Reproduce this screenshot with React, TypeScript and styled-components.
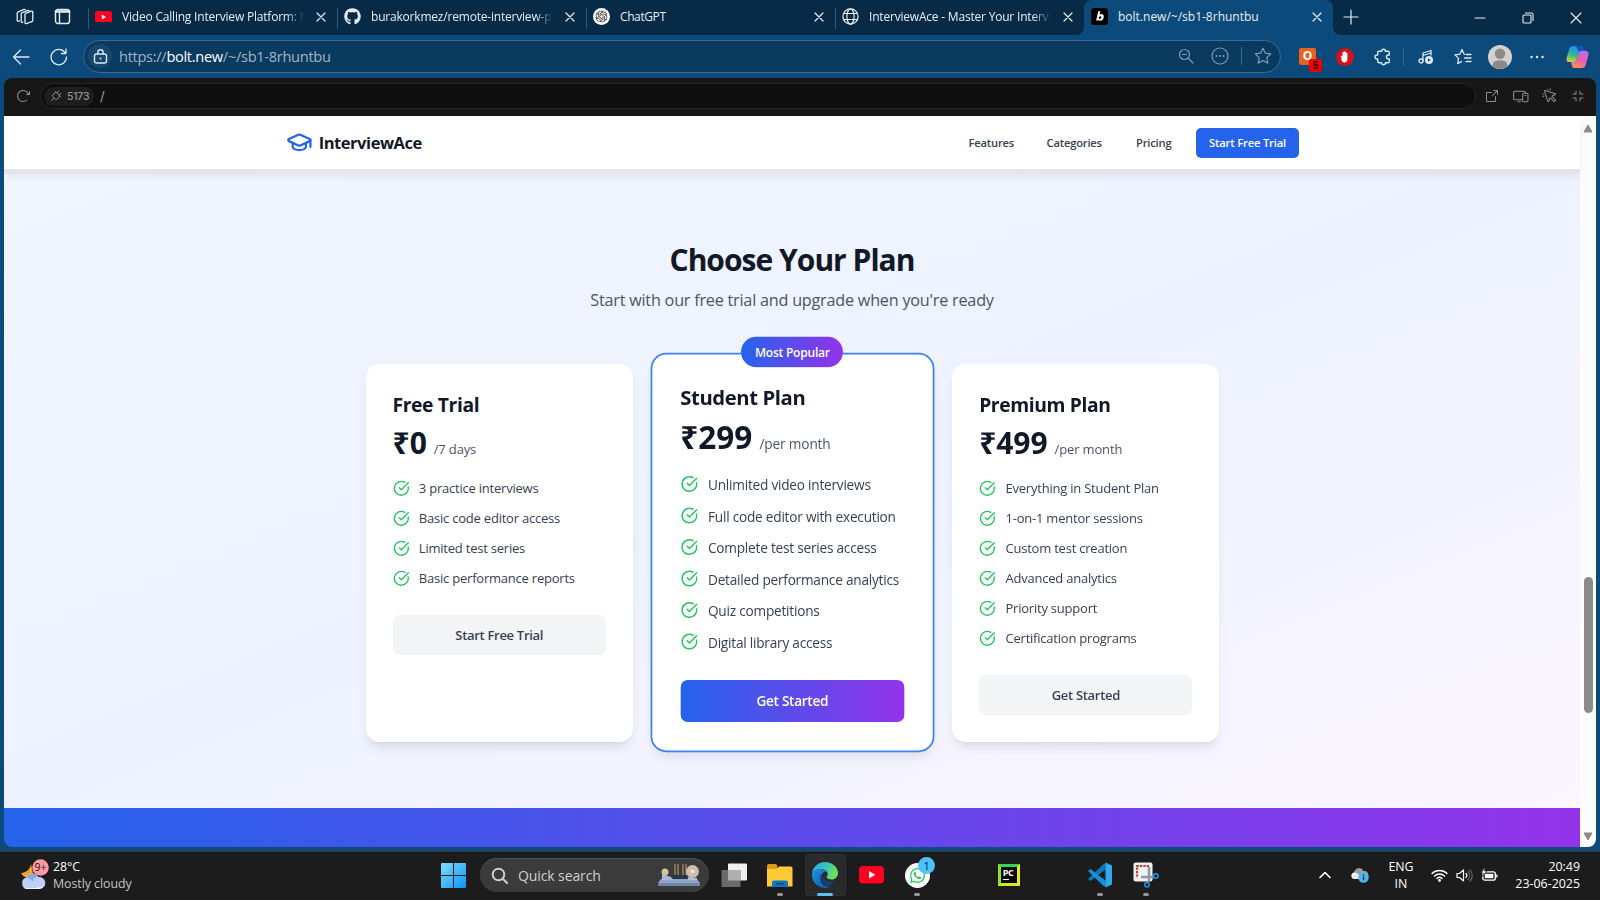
import React from 'react';
import styled, { createGlobalStyle, css } from 'styled-components';
import { CircleCheckBig, GraduationCap } from 'lucide-react';
import { FaGithub, FaWhatsapp } from 'react-icons/fa';
import { SiOpenai } from 'react-icons/si';
import {
  PiArrowClockwise,
  PiArrowSquareOut,
  PiCornersIn,
  PiCursorClick,
  PiDevices,
  PiPlug,
} from 'react-icons/pi';

const GlobalStyle = createGlobalStyle`
  * {
    box-sizing: border-box;
  }

  body {
    margin: 0;
    overflow: hidden;
    font-family: 'Segoe UI', 'Open Sans', 'Noto Sans', sans-serif;
  }

  svg {
    display: block;
    flex: none;
  }
`;

const Desktop = styled.div`
  display: flex;
  flex-direction: column;
  width: 1600px;
  height: 900px;
  background: #0b4a7a;
`;

/* ---------- tabs ---------- */

const TabStrip = styled.div`
  display: flex;
  align-items: stretch;
  flex: none;
  height: 35px;
  background: #072a47;
  color: #e6edf3;
`;

const StripTools = styled.div`
  display: flex;
  align-items: center;
  gap: 20px;
  width: 88px;
  padding: 0 0 2px 16px;
`;

const TabBox = styled.div<{ $active?: boolean }>`
  position: relative;
  display: flex;
  align-items: center;
  width: 249px;
  padding: 0 11px 2px 7px;

  ${({ $active }) =>
    $active
      ? css`
          background: #0b4a7a;
          border-radius: 8px 8px 0 0;

          &::before,
          &::after {
            content: '';
            position: absolute;
            bottom: 0;
            width: 7px;
            height: 7px;
          }

          &::before {
            left: -7px;
            background: radial-gradient(circle at 0 0, transparent 6.5px, #0b4a7a 7px);
          }

          &::after {
            right: -7px;
            background: radial-gradient(circle at 100% 0, transparent 6.5px, #0b4a7a 7px);
          }
        `
      : css`
          background: linear-gradient(#3a566d, #3a566d) 0 8px / 1px 21px no-repeat;
        `}
`;

const TabTitle = styled.div<{ $fade?: boolean; $tracking?: number }>`
  flex: 1;
  margin: 0 6px 0 10px;
  white-space: nowrap;
  font-size: 12px;
  line-height: 18px;
  letter-spacing: ${({ $tracking = -0.2 }) => $tracking}px;
  ${({ $fade }) =>
    $fade && 'mask-image: linear-gradient(90deg, #000 calc(100% - 24px), transparent 97%);'}
`;

const NewTab = styled.div`
  display: flex;
  align-items: center;
  flex: 1;
  padding: 0 0 2px 10px;
`;

const WindowButtons = styled.div`
  display: flex;
  align-items: center;
  gap: 36px;
  padding-right: 18px;
`;

/* ---------- toolbar ---------- */

const Toolbar = styled.div`
  display: flex;
  align-items: center;
  flex: none;
  height: 43px;
  padding: 0 11px 0 11px;
  color: #dce8f2;
`;

const NavButtons = styled.div`
  display: flex;
  align-items: center;
  gap: 20px;
  width: 72px;
  padding-left: 1px;
`;

const AddressBar = styled.div`
  display: flex;
  align-items: center;
  width: 1198px;
  height: 33px;
  padding: 0 8px 1px 4px;
  border: 1px solid #3f6b8f;
  border-radius: 17px;
  background: #093a60;
`;

const LockCircle = styled.div`
  display: flex;
  align-items: center;
  justify-content: center;
  width: 24px;
  height: 24px;
  border-radius: 50%;
  background: #17476e;
`;

const Url = styled.div`
  flex: 1;
  padding-left: 7px;
  font-size: 14.6px;
  letter-spacing: -0.3px;
  color: #a3b5c4;

  b {
    font-weight: 400;
    color: #fff;
  }
`;

const AddressTools = styled.div`
  display: flex;
  align-items: center;
  color: #7b9ab3;
`;

const VerticalRule = styled.i<{ $margin: string }>`
  width: 1px;
  height: 18px;
  margin: ${({ $margin }) => $margin};
  background: #3c6587;
`;

const Extensions = styled.div`
  display: flex;
  align-items: center;
  flex: 1;
  padding-left: 18px;
`;

const OrangeExtension = styled.div`
  position: relative;
  width: 17px;
  height: 17px;
  margin-right: 20px;
  border-radius: 2px;
  background: #e9601f;
  color: #fff;
  font-size: 12px;
  font-weight: 700;
  line-height: 16px;
  text-align: center;
`;

const ExtensionCount = styled.span`
  position: absolute;
  left: 10px;
  top: 11px;
  width: 13px;
  height: 13px;
  border-radius: 3px;
  background: #f10000;
  color: #2a0000;
  font: 700 10px/13px 'Liberation Sans', sans-serif;
`;

const Avatar = styled.div`
  margin: 0 18px 0 16px;
`;

/* ---------- preview frame ---------- */

const Preview = styled.div`
  display: flex;
  flex-direction: column;
  flex: none;
  height: 768.5px;
  margin: 0 4px 4.5px;
  overflow: hidden;
  border-radius: 8px;
  background: #171717;
`;

const PreviewBar = styled.div`
  display: flex;
  align-items: center;
  flex: none;
  height: 38px;
  padding: 0 10px 2px 11px;
  color: #8e8e8e;
`;

const PathField = styled.div`
  display: flex;
  align-items: center;
  width: 1436px;
  height: 26px;
  margin-left: 9px;
  padding-left: 3px;
  border: 1px solid #262626;
  border-radius: 13px;
  background: #0f0f0f;
  color: #a0a0a0;
  font: 13px 'Inter', sans-serif;
`;

const Port = styled.div`
  display: flex;
  align-items: center;
  gap: 5px;
  width: 50px;
  height: 19px;
  margin-right: 6px;
  padding-left: 6px;
  border-radius: 10px;
  background: #1e1e1e;
  color: #949494;
  font-size: 10.4px;
  font-weight: 500;
  letter-spacing: -0.2px;
`;

const PreviewTools = styled.div`
  display: flex;
  align-items: center;
  gap: 12.5px;
  margin-left: auto;
`;

const Viewport = styled.div`
  display: flex;
  flex: 1;
  min-height: 0;
`;

const Page = styled.main`
  display: flex;
  flex-direction: column;
  width: 1576px;
`;

const Scrollbar = styled.div`
  display: flex;
  flex-direction: column;
  align-items: center;
  width: 16px;
  padding: 8px 0 6px;
  background: #fcfcfc;
`;

const Thumb = styled.div`
  width: 9px;
  height: 136px;
  margin: 444px 0 auto;
  border-radius: 5px;
  background: #8b8b8b;
`;

/* ---------- site ---------- */

const SiteHeader = styled.header`
  position: relative;
  display: flex;
  align-items: center;
  flex: none;
  height: 53px;
  padding: 0 281px 0 282px;
  background: #fff;
  box-shadow: 0 5px 0 #e3e5e8, 0 8px 8px -1px rgb(0 0 0 / 0.07);
`;

const Brand = styled.div`
  display: flex;
  align-items: center;
  gap: 6px;
  flex: 1;
  color: #111827;
  font-size: 16.5px;
  font-weight: 700;
  letter-spacing: -0.45px;
`;

const SiteLink = styled.a<{ $width: number; $gap: number }>`
  width: ${({ $width }) => $width}px;
  margin-right: ${({ $gap }) => $gap}px;
  color: #374151;
  font-size: 11.2px;
  font-weight: 600;
  letter-spacing: -0.2px;
  white-space: nowrap;
`;

const TrialButton = styled.button`
  width: 103px;
  height: 30px;
  padding: 0 0 1px;
  border: 0;
  border-radius: 5px;
  background: #2563eb;
  color: #fff;
  font: inherit;
  font-size: 11.3px;
  font-weight: 600;
  letter-spacing: -0.22px;
`;

const Pricing = styled.section`
  display: flex;
  flex-direction: column;
  align-items: center;
  flex: none;
  height: 639px;
  padding-top: 73px;
  background: linear-gradient(to bottom right, #eff6ff, #eef2ff, #faf5ff);
`;

const Heading = styled.h2`
  margin: 0;
  color: #111827;
  font-size: 30px;
  font-weight: 700;
  line-height: 35px;
  letter-spacing: -0.98px;
`;

const Subheading = styled.p`
  margin: 11px 0 51.3px;
  color: #4b5563;
  font-size: 16.2px;
  line-height: 25px;
  letter-spacing: -0.22px;
`;

const Plans = styled.div`
  display: grid;
  grid-template-columns: repeat(3, 266.67px);
  gap: 26.67px;
  height: 377.4px;
  margin-left: 1px;
`;

const PlanCard = styled.article<{ $popular?: boolean }>`
  position: relative;
  padding: 26.67px;
  border-radius: 13.33px;
  background: #fff;
  box-shadow: 0 8px 12px -3px rgb(0 0 0 / 0.1), 0 3px 5px -4px rgb(0 0 0 / 0.1);

  ${({ $popular }) =>
    $popular &&
    css`
      transform: scale(1.05);
      box-shadow: 0 0 0 1.67px #3b82f6, 0 8px 12px -3px rgb(0 0 0 / 0.1),
        0 3px 5px -4px rgb(0 0 0 / 0.1);
    `}
`;

const Ribbon = styled.div`
  position: absolute;
  left: 50%;
  top: -17.2px;
  width: 97px;
  height: 29.2px;
  transform: translateX(-50%);
  border-radius: 15px;
  background: linear-gradient(to right, #2563eb, #9333ea);
  color: #fff;
  font-size: 11.5px;
  font-weight: 600;
  line-height: 29px;
  letter-spacing: -0.24px;
  text-align: center;
`;

const PlanName = styled.h3`
  margin: 1.2px 0 6px;
  color: #111827;
  font-size: 19.3px;
  font-weight: 700;
  line-height: 26.67px;
  letter-spacing: -0.38px;
`;

const Price = styled.div`
  display: flex;
  align-items: baseline;
  gap: 7px;
  height: 34px;
  margin-bottom: 19.3px;
  color: #111827;
  font-size: 30px;
  font-weight: 700;
  line-height: 36px;
  letter-spacing: -0.05px;

  span {
    color: #4b5563;
    font-size: 13px;
    font-weight: 400;
    letter-spacing: -0.15px;
  }
`;

const FeatureList = styled.ul`
  display: flex;
  flex-direction: column;
  gap: 10px;
  margin: 0 0 26.67px;
  padding: 0;
  list-style: none;
`;

const Feature = styled.li`
  display: flex;
  align-items: center;
  gap: 9.7px;
  height: 20px;
  color: #374151;
  font-size: 13px;
  letter-spacing: -0.22px;
  white-space: nowrap;
`;

const PlanButton = styled.button<{ $primary?: boolean }>`
  width: 100%;
  height: 40px;
  border: 0;
  border-radius: 6.67px;
  background: ${({ $primary }) =>
    $primary ? 'linear-gradient(to right, #2563eb, #9333ea)' : '#f3f4f6'};
  color: ${({ $primary }) => ($primary ? '#fff' : '#374151')};
  font: inherit;
  font-size: 13px;
  font-weight: 600;
  letter-spacing: -0.3px;
`;

const NextSection = styled.section`
  flex: 1;
  background: linear-gradient(to right, #2563eb, #9333ea);
`;

/* ---------- taskbar ---------- */

const Taskbar = styled.footer`
  display: flex;
  align-items: center;
  flex: 1;
  padding: 0 20px 2px;
  border-top: 1px solid #343638;
  background: #1c1c1c;
  color: #fff;
`;

const Weather = styled.div`
  display: flex;
  align-items: center;
  gap: 4px;
  width: 421px;
  font-size: 12.4px;
  line-height: 17px;
  letter-spacing: -0.05px;

  p {
    margin: 0;
  }

  p + p {
    color: #c5c5c5;
  }
`;

const SearchBox = styled.div`
  display: flex;
  align-items: center;
  width: 229px;
  height: 34px;
  margin: 0 2px 0 14px;
  padding: 0 9px 0 11px;
  border-radius: 17px;
  background: #3b3b3b;
  box-shadow: inset 0 1px #505050;
  color: #cfcfcf;
  font-size: 14px;
  letter-spacing: -0.1px;

  span {
    flex: 1;
    padding-left: 10px;
  }
`;

const AppSlot = styled.div<{ $active?: boolean; $running?: boolean }>`
  position: relative;
  display: flex;
  align-items: center;
  justify-content: center;
  width: 41.8px;
  height: 42px;
  margin: 0 2px;
  border-radius: 4px;
  ${({ $active }) => $active && 'background: #2a2a2a; box-shadow: inset 0 0 0 1px #303030;'}

  ${({ $active, $running }) =>
    $running &&
    css`
      &::after {
        content: '';
        position: absolute;
        bottom: 0;
        width: ${$active ? 16 : 6}px;
        height: 3px;
        border-radius: 2px;
        background: ${$active ? '#60bdf0' : '#969696'};
      }
    `}
`;

const WhatsAppDisc = styled.div`
  display: flex;
  align-items: center;
  justify-content: center;
  width: 25px;
  height: 25px;
  border-radius: 50%;
  background: #fff;
  color: #25c35b;
`;

const UnreadBadge = styled.span`
  position: absolute;
  left: 22px;
  top: 3px;
  width: 17px;
  height: 17px;
  border-radius: 50%;
  background: #4cc2ff;
  color: #0a2a3d;
  font-size: 11px;
  line-height: 17px;
  text-align: center;
`;

const PyCharm = styled.div`
  width: 22px;
  height: 22px;
  padding: 1px 2px;
  border: 3px solid;
  border-color: #32d74b #e6e82a #d3e42c #8fe02c;
  background: #050505;
  font-size: 9px;
  font-weight: 700;
  line-height: 10px;
  letter-spacing: -0.4px;

  &::after {
    content: '';
    display: block;
    width: 6px;
    height: 1px;
    margin-top: 1px;
    background: #fff;
  }
`;

const Tray = styled.div`
  display: flex;
  align-items: center;
  margin-left: auto;
  font-size: 12.4px;
  line-height: 17px;
`;

const Language = styled.div`
  width: 28px;
  margin: 0 16px 0 18px;
  text-align: center;
  white-space: nowrap;
`;

const Clock = styled.div`
  width: 82px;
  text-align: right;
`;

/* ---------- icons ---------- */

const Stroke = ({
  size,
  width = 1.3,
  children,
}: {
  size: number;
  width?: number;
  children: React.ReactNode;
}) => (
  <svg
    width={size}
    height={size}
    viewBox={`0 0 ${size} ${size}`}
    fill="none"
    stroke="currentColor"
    strokeWidth={width}
    strokeLinecap="round"
    strokeLinejoin="round"
  >
    {children}
  </svg>
);

const CloseIcon = () => (
  <Stroke size={10} width={1.2}>
    <path d="M1 1l8 8M9 1L1 9" />
  </Stroke>
);

const YouTubeIcon = ({ size }: { size: number }) => (
  <svg width={size} height={size * 0.7} viewBox="0 0 20 14">
    <rect width="20" height="14" rx="3" fill="#ff0022" />
    <path d="M8 4l5 3-5 3z" fill="#fff" />
  </svg>
);

const GlobeIcon = () => (
  <Stroke size={17} width={1.2}>
    <circle cx="8.5" cy="8.5" r="7.6" />
    <ellipse cx="8.5" cy="8.5" rx="3.6" ry="7.6" />
    <path d="M1.7 5.5h13.6M1.7 11.5h13.6" />
  </Stroke>
);

const GptIcon = () => (
  <svg width="17" height="17" viewBox="0 0 17 17">
    <circle cx="8.5" cy="8.5" r="8.5" fill="#fff" />
    <SiOpenai x="2.5" y="2.5" size={12} color="#222" />
  </svg>
);

const BoltIcon = () => (
  <svg width="17" height="17" viewBox="0 0 17 17">
    <rect width="17" height="17" rx="3.5" fill="#000" />
    <path
      d="M7.2 3.3L5.2 12.6h2l.3-.9c.5.7 1.1 1 1.9 1 2 0 3.4-1.9 3.4-4 0-1.6-.9-2.6-2.3-2.6-.8 0-1.4.3-1.9.8l.7-3.6zM9.1 8.2c.8 0 1.2.4 1.2 1.1 0 1-.7 1.7-1.5 1.7-.6 0-1-.4-1-1 0-1 .6-1.8 1.3-1.8z"
      fill="#fff"
    />
  </svg>
);

const CopilotIcon = () => (
  <svg width="23" height="22" viewBox="0 0 23 22">
    <defs>
      <linearGradient id="cpLeft" x1="0.3" y1="0" x2="0" y2="1">
        <stop offset="0" stopColor="#1b8ff0" />
        <stop offset="0.5" stopColor="#35b98a" />
        <stop offset="1" stopColor="#f4d42e" />
      </linearGradient>
      <linearGradient id="cpRight" x1="0.6" y1="0" x2="0.2" y2="1">
        <stop offset="0" stopColor="#b56cf2" />
        <stop offset="0.5" stopColor="#ef5fa0" />
        <stop offset="1" stopColor="#f9935a" />
      </linearGradient>
    </defs>
    <path
      d="M16 22H8.5C7 22 6.3 21 5.9 19.7L5.2 16h2.6c1.5 0 2.3-1 2.8-2.5l2-6.5c.5-1.5 1.4-2.3 2.9-2.3H20c2.2 0 3 2.3 2.4 4.5l-2.6 9.6C19.2 20.6 18 22 16 22z"
      fill="url(#cpRight)"
    />
    <path
      d="M7 0h7.5c1.5 0 2.2 1 2.6 2.3l.7 2.4h-2.3c-1.5 0-2.3.8-2.8 2.3l-2 6.5C10.2 15 9.3 16 7.8 16H3C.8 16 0 14.2.6 12l2.6-9C3.8 1.2 5 0 7 0z"
      fill="url(#cpLeft)"
    />
    <path d="M10 0h4.5c1.5 0 2.2 1 2.6 2.3l.7 2.4h-2.3c-1.2 0-2 .5-2.5 1.5z" fill="#1a4fc4" />
  </svg>
);

const WeatherIcon = () => (
  <svg width="29" height="32" viewBox="0 0 29 32">
    <path d="M11 5c-1 5-4 8.5-10 9 2 5 9 6 12 1z" fill="#f5a623" />
    <path d="M7 30a6 6 0 0 1-1-11.5A7 7 0 0 1 18.5 18 6 6 0 0 1 20 30z" fill="#bcd0f5" />
    <path d="M6 18.5a7 7 0 0 1 12.5-.5c-3 0-5 2-6 4-2-2-4-3-6.5-3.5z" fill="#8eabdf" />
    <path d="M3 28c4 1.5 16 1.5 20-1a5 5 0 0 1-4 3H7a6 6 0 0 1-4-2z" fill="#eef4ff" />
    <circle cx="20.5" cy="8.5" r="8.3" fill="#ff9aa2" />
    <text x="14.5" y="12.3" fontSize="10.5" fill="#2b1114">
      9+
    </text>
  </svg>
);

const WindowsIcon = () => (
  <svg width="25" height="25" viewBox="0 0 25 25">
    <defs>
      <linearGradient id="win" x1="0" y1="0" x2="1" y2="1">
        <stop offset="0" stopColor="#7fdcff" />
        <stop offset="1" stopColor="#0a94f5" />
      </linearGradient>
    </defs>
    <path
      d="M0 1a1 1 0 0 1 1-1h11v12H0zM13 0h11a1 1 0 0 1 1 1v11H13zM0 13h12v12H1a1 1 0 0 1-1-1zM13 13h12v11a1 1 0 0 1-1 1H13z"
      fill="url(#win)"
    />
  </svg>
);

const PressIcon = () => (
  <svg width="42" height="24" viewBox="0 0 42 24">
    <path d="M3 16h36l3 4v3H0v-3z" fill="#8fa3c4" />
    <path d="M0 20h42v3H0z" fill="#6f86ad" />
    <circle cx="7" cy="9" r="3.5" fill="#d8c3a0" />
    <path d="M4 11l9 3 2 3H4z" fill="#aebad0" />
    <path d="M17 1v12M20 1v12M25 1v12M28 1v12" stroke="#c6a56a" />
    <path d="M15 12h14v4H15z" fill="#27344d" />
    <circle cx="34.5" cy="8.5" r="6.5" fill="#cdbfae" />
    <circle cx="34.5" cy="8.5" r="2" fill="#f1e3cd" />
    <path d="M30 14l9 1v2h-9z" fill="#b6bfd2" />
  </svg>
);

const TaskViewIcon = () => (
  <svg width="26" height="24" viewBox="0 0 26 24">
    <rect x="7" y="0.5" width="19" height="17" rx="1" fill="#f0f0f0" />
    <rect x="0.5" y="7" width="19" height="17" rx="1" fill="#6b6b6b" />
    <path d="M7 7h12.5v10.5H7z" fill="#b0b0b0" />
  </svg>
);

const FolderIcon = () => (
  <svg width="26" height="23" viewBox="0 0 26 23">
    <path d="M0 2a2 2 0 0 1 2-2h7l2 2.5h-1V10H0z" fill="#dd9b18" />
    <path d="M0 5h9l3-2.5h12A1.5 1.5 0 0 1 25.5 4v18.500H0z" fill="#fdc935" />
    <path d="M5 23v-4.500a2 2 0 0 1 2-2h12a2 2 0 0 1 2 2V23z" fill="#1173c7" />
    <path d="M9 19h8v1.5H9z" fill="#0a4b8c" />
  </svg>
);

const EdgeIcon = () => (
  <svg width="26" height="26" viewBox="0 0 26 26">
    <defs>
      <linearGradient id="edgeTop" x1="0" y1="0" x2="1" y2="0.3">
        <stop offset="0" stopColor="#2aa7e8" />
        <stop offset="0.6" stopColor="#35c7b8" />
        <stop offset="1" stopColor="#6fe05a" />
      </linearGradient>
      <linearGradient id="edgeLow" x1="0" y1="0" x2="1" y2="1">
        <stop offset="0" stopColor="#1e93e4" />
        <stop offset="1" stopColor="#0d55a6" />
      </linearGradient>
    </defs>
    <path
      d="M0 12C.5 5 6 0 13 0c7.5 0 13 5.5 13 11 0 4-3 6.5-6.5 6.5-3 0-5-1-5-2.2 0-.8 1.200-1.300 1.200-3.300C15.700 9 12 7 8.500 7 4 7 1 9.500 0 12z"
      fill="url(#edgeTop)"
    />
    <path
      d="M0 13C0 9.5 4 7 8.5 7c2.5 0 5 1 6.3 2.5C11 9.5 8.5 13 8.5 16c0 5 4 9 9 9-1.5.7-3 1-4.5 1C6 26 0 20.5 0 13z"
      fill="url(#edgeLow)"
    />
    <path
      d="M10.7 12c-.7 1-1.200 2.500-1.200 4 0 4.500 3.500 7.500 7 8 3-1 5.500-3 7-5.500-1.500 1-3 1.300-5 1.300-4.500 0-8-3.300-7.800-7.800z"
      fill="#12407c"
    />
  </svg>
);

const VsCodeIcon = () => (
  <svg width="26" height="26" viewBox="0 0 26 26">
    <path d="M18.5 7.5L3.5 19 1 17 16 2.5 19 1z" fill="#0f76bd" />
    <path d="M18.5 18.5L3.5 7 1 9l15 14.5 3 1.5z" fill="#1a8fd8" />
    <path d="M18.5 0.5L25 3.5v19l-6.5 3z" fill="#2fa8ee" />
  </svg>
);

const SnipIcon = () => (
  <svg width="26" height="26" viewBox="0 0 26 26">
    <rect x="0.5" y="0.5" width="19" height="19" rx="2" fill="#f1f1f1" />
    <path
      d="M16 4H4v12"
      fill="none"
      stroke="#c3342b"
      strokeWidth="2.2"
      strokeDasharray="2.2 1.2"
    />
    <path d="M16 5v14M8 15h13" stroke="#8d99a5" strokeWidth="2.5" />
    <circle cx="22.8" cy="14" r="2.3" fill="none" stroke="#2196e8" strokeWidth="1.5" />
    <circle cx="14" cy="22.8" r="2.3" fill="none" stroke="#2196e8" strokeWidth="1.5" />
  </svg>
);

/* ---------- data ---------- */

const tabs = [
  { title: 'Video Calling Interview Platform: N', icon: <YouTubeIcon size={17} />, fade: true },
  { title: 'burakorkmez/remote-interview-pl', icon: <FaGithub size={17} />, fade: true },
  { title: 'ChatGPT', icon: <GptIcon />, tracking: -0.4 },
  { title: 'InterviewAce - Master Your Intervi', icon: <GlobeIcon />, fade: true },
  { title: 'bolt.new/~/sb1-8rhuntbu', icon: <BoltIcon />, active: true, tracking: 0 },
];

const plans = [
  {
    name: 'Free Trial',
    price: '₹0',
    period: '/7 days',
    cta: 'Start Free Trial',
    features: [
      '3 practice interviews',
      'Basic code editor access',
      'Limited test series',
      'Basic performance reports',
    ],
  },
  {
    name: 'Student Plan',
    price: '₹299',
    period: '/per month',
    cta: 'Get Started',
    popular: true,
    features: [
      'Unlimited video interviews',
      'Full code editor with execution',
      'Complete test series access',
      'Detailed performance analytics',
      'Quiz competitions',
      'Digital library access',
    ],
  },
  {
    name: 'Premium Plan',
    price: '₹499',
    period: '/per month',
    cta: 'Get Started',
    features: [
      'Everything in Student Plan',
      '1-on-1 mentor sessions',
      'Custom test creation',
      'Advanced analytics',
      'Priority support',
      'Certification programs',
    ],
  },
];

/* ---------- parts ---------- */

const BrowserTabs = () => (
  <TabStrip>
    <StripTools>
      <Stroke size={18}>
        <path d="M9 6.5a1.5 1.5 0 0 1 1-1.4l5.5-1.9a1 1 0 0 1 1.3 1v8a1.5 1.5 0 0 1-1 1.4l-5.4 2a1 1 0 0 1-1.4-.9z" />
        <path d="M6.8 14.2a1 1 0 0 1-1.6-.9V6A1.5 1.5 0 0 1 6.2 4.6L12 2.4a1 1 0 0 1 1.2.4" />
        <path d="M3.2 12.7a1 1 0 0 1-2-.9V5.2a1.5 1.5 0 0 1 1-1.4L8 1.4a1 1 0 0 1 1.2.3" />
      </Stroke>
      <Stroke size={17} width={1.4}>
        <rect x="1.5" y="1.5" width="14" height="14" rx="2.5" />
        <path d="M2 3.5h13" strokeWidth="2.6" />
        <path d="M5.5 5v10" />
      </Stroke>
    </StripTools>
    {tabs.map(({ title, icon, active, fade, tracking }) => (
      <TabBox key={title} $active={active}>
        {icon}
        <TabTitle $fade={fade} $tracking={tracking}>
          {title}
        </TabTitle>
        <CloseIcon />
      </TabBox>
    ))}
    <NewTab>
      <Stroke size={16} width={1.2}>
        <path d="M8 1v14M1 8h14" />
      </Stroke>
    </NewTab>
    <WindowButtons>
      <Stroke size={12} width={1.1}>
        <path d="M1 6h10" />
      </Stroke>
      <Stroke size={12} width={1.1}>
        <rect x="1" y="3" width="8" height="8" rx="1" />
        <path d="M3.5 1H9.5a1.5 1.5 0 0 1 1.5 1.5V8.5" />
      </Stroke>
      <Stroke size={12} width={1.1}>
        <path d="M1 1l10 10M11 1L1 11" />
      </Stroke>
    </WindowButtons>
  </TabStrip>
);

const BrowserToolbar = () => (
  <Toolbar>
    <NavButtons>
      <Stroke size={18}>
        <path d="M17 9H1.5M8.5 2l-7 7 7 7" />
      </Stroke>
      <Stroke size={18}>
        <path d="M16.5 9A7.7 7.7 0 1 1 15 4.5M16 1v4.5h-4.5" />
      </Stroke>
    </NavButtons>
    <AddressBar>
      <LockCircle>
        <Stroke size={15} width={1.4}>
          <rect x="1.5" y="5" width="12" height="9" rx="2" />
          <path d="M4.8 5V3.5a2.7 2.7 0 0 1 5.4 0V5" />
          <circle cx="7.5" cy="9.5" r="0.4" />
        </Stroke>
      </LockCircle>
      <Url>
        https://<b>bolt.new</b>/~/sb1-8rhuntbu
      </Url>
      <AddressTools>
        <Stroke size={16} width={1.2}>
          <circle cx="6.5" cy="6.5" r="5" />
          <path d="M10.5 10.5L15 15M4.5 6.5h4" />
        </Stroke>
        <span style={{ width: 17 }} />
        <Stroke size={18} width={1.2}>
          <circle cx="9" cy="9" r="8" />
          <path d="M5.5 9h.1M9 9h.1M12.5 9h.1" strokeWidth="2" />
        </Stroke>
        <VerticalRule $margin="0 12px 0 12px" />
        <Stroke size={18} width={1.2}>
          <path d="M9 1.2l2.400 5 5.400.7-4 3.800 1 5.400L9 13.500l-4.800 2.600 1-5.400-4-3.800 5.400-.7z" />
        </Stroke>
      </AddressTools>
    </AddressBar>
    <Extensions>
      <OrangeExtension>
        O<ExtensionCount>5</ExtensionCount>
      </OrangeExtension>
      <svg width="18" height="18" viewBox="0 0 18 18">
        <circle cx="9" cy="9" r="9" fill="#d5121b" />
        <path
          d="M5.5 9.5l-1-1.200c.5-.8 1.300-.5 2 .4V4.500c0-.8 1-.8 1.100 0V3.700c.1-.8 1.200-.8 1.300 0v.6c.1-.8 1.200-.8 1.300 0v1c.2-.7 1.200-.6 1.200.2V11c0 2.300-1.300 3.500-3 3.500-1.600 0-2.500-1-3-2.500z"
          fill="#fff"
        />
      </svg>
      <span style={{ width: 20 }} />
      <Stroke size={18} width={1.4}>
        <path d="M5 3.200H7.600a1.900 1.900 0 0 1 3.800 0H14a1.300 1.300 0 0 1 1.300 1.300V7h-.8a2 2 0 0 0 0 4h.8v2.500a1.300 1.300 0 0 1-1.300 1.300H11.400a1.900 1.900 0 0 1-3.800 0H5a1.300 1.300 0 0 1-1.300-1.300V11H3a2 2 0 0 1 0-4h.700V4.500A1.300 1.300 0 0 1 5 3.200z" />
      </Stroke>
      <VerticalRule $margin="0 14px 0 11px" />
      <Stroke size={16}>
        <circle cx="3" cy="12" r="2" />
        <path d="M5 12V4l8-2.500V6M5 6.500l8-2.500" />
        <circle cx="11" cy="11" r="4" fill="#dce8f2" stroke="none" />
        <path d="M10 9.200v3.600l2.800-1.800z" fill="#0b4a7a" stroke="none" />
      </Stroke>
      <span style={{ width: 20 }} />
      <Stroke size={18}>
        <path d="M10.200 6.300L8 1.500l-2.200 4.700L1 6.900l3.500 3.500-.8 5.200 3.800-2M12 6.500h5M10.500 10h6.500M12 13.500h5" />
      </Stroke>
      <Avatar>
        <svg width="24" height="24" viewBox="0 0 24 24">
          <circle cx="12" cy="12" r="12" fill="#d3d1cf" />
          <circle cx="12" cy="8.8" r="5.2" fill="#8c8a88" />
          <path
            d="M4.5 21.3c0-4 2.5-6 7.5-6s7.5 2 7.5 6A12 12 0 0 1 12 24a12 12 0 0 1-7.5-2.7z"
            fill="#8c8a88"
          />
        </svg>
      </Avatar>
      <Stroke size={14} width={2.4}>
        <path d="M1.5 7h.1M7 7h.1M12.5 7h.1" />
      </Stroke>
      <span style={{ flex: 1 }} />
      <CopilotIcon />
    </Extensions>
  </Toolbar>
);

const PreviewToolbar = () => (
  <PreviewBar>
    <PiArrowClockwise size={16} />
    <PathField>
      <Port>
        <PiPlug size={12} />
        5173
      </Port>
      /
    </PathField>
    <PreviewTools>
      <PiArrowSquareOut size={16} />
      <PiDevices size={17} />
      <PiCursorClick size={16} />
      <PiCornersIn size={16} />
    </PreviewTools>
  </PreviewBar>
);

const Site = () => (
  <Page>
    <SiteHeader>
      <Brand>
        <GraduationCap size={26.67} color="#2563eb" />
        InterviewAce
      </Brand>
      <SiteLink $width={45.5} $gap={32.5}>
        Features
      </SiteLink>
      <SiteLink $width={57} $gap={32.5}>
        Categories
      </SiteLink>
      <SiteLink $width={36} $gap={24}>
        Pricing
      </SiteLink>
      <TrialButton>Start Free Trial</TrialButton>
    </SiteHeader>
    <Pricing>
      <Heading>Choose Your Plan</Heading>
      <Subheading>Start with our free trial and upgrade when you're ready</Subheading>
      <Plans>
        {plans.map(({ name, price, period, cta, popular, features }) => (
          <PlanCard key={name} $popular={popular}>
            {popular && <Ribbon>Most Popular</Ribbon>}
            <PlanName>{name}</PlanName>
            <Price>
              {price}
              <span>{period}</span>
            </Price>
            <FeatureList>
              {features.map((feature) => (
                <Feature key={feature}>
                  <CircleCheckBig size={16.67} color="#22c55e" />
                  {feature}
                </Feature>
              ))}
            </FeatureList>
            <PlanButton $primary={popular}>{cta}</PlanButton>
          </PlanCard>
        ))}
      </Plans>
    </Pricing>
    <NextSection />
  </Page>
);

const DesktopTaskbar = () => (
  <Taskbar>
    <Weather>
      <WeatherIcon />
      <div>
        <p>28°C</p>
        <p>Mostly cloudy</p>
      </div>
    </Weather>
    <WindowsIcon />
    <SearchBox>
      <Stroke size={17} width={2}>
        <circle cx="7.5" cy="7.5" r="5.8" />
        <path d="M12 12l4 4" />
      </Stroke>
      <span>Quick search</span>
      <PressIcon />
    </SearchBox>
    <AppSlot>
      <TaskViewIcon />
    </AppSlot>
    <AppSlot $running>
      <FolderIcon />
    </AppSlot>
    <AppSlot $active $running>
      <EdgeIcon />
    </AppSlot>
    <AppSlot>
      <YouTubeIcon size={25} />
    </AppSlot>
    <AppSlot $running>
      <WhatsAppDisc>
        <FaWhatsapp size={17} />
      </WhatsAppDisc>
      <UnreadBadge>1</UnreadBadge>
    </AppSlot>
    <AppSlot />
    <AppSlot>
      <PyCharm>PC</PyCharm>
    </AppSlot>
    <AppSlot />
    <AppSlot $running>
      <VsCodeIcon />
    </AppSlot>
    <AppSlot $running>
      <SnipIcon />
    </AppSlot>
    <Tray>
      <Stroke size={12} width={1.6}>
        <path d="M1 8.5L6 3.5l5 5" />
      </Stroke>
      <span style={{ width: 20 }} />
      <svg width="18" height="15" viewBox="0 0 18 15">
        <path d="M3.5 11A3.3 3.3 0 0 1 3 4.5 5 5 0 0 1 12.5 3 4 4 0 0 1 14 11z" fill="#9c9c9c" />
        <path d="M3.5 11A3.3 3.3 0 0 1 3 4.500c3 0 5 2 8 6.500z" fill="#eee" />
        <circle cx="12.5" cy="9.5" r="5.2" fill="#4cb8ee" />
        <path d="M12.5 8.5v3.8M12.5 6.3v1.2" stroke="#10212c" strokeWidth="1.3" />
      </svg>
      <Language>
        ENG
        <br />
        IN
      </Language>
      <Stroke size={17} width={1.4}>
        <path d="M1 6.5a10.8 10.8 0 0 1 15 0M3.5 9a7.2 7.2 0 0 1 10 0M6 11.5a3.7 3.7 0 0 1 5 0" />
        <circle cx="8.5" cy="13.5" r="0.7" fill="currentColor" />
      </Stroke>
      <span style={{ width: 8 }} />
      <Stroke size={17} width={1.2}>
        <path d="M1 6.5h2.5L7.5 3v11L3.5 10.5H1z" />
        <path d="M10 6.5a3 3 0 0 1 0 4" />
        <path d="M12 4.5a6 6 0 0 1 0 8M14 2.8a8.5 8.5 0 0 1 0 11.4" stroke="#6a6a6a" />
      </Stroke>
      <span style={{ width: 8 }} />
      <svg width="17" height="16" viewBox="0 0 17 16">
        <rect x="1.8" y="4.8" width="12.5" height="8.4" rx="2" fill="none" stroke="#fff" strokeWidth="1.3" />
        <path d="M3.8 6.8h8.5v4.4H3.8z" fill="#fff" />
        <path d="M15.2 7.5h1.3v3h-1.3z" fill="#fff" />
        <path d="M4 0L0 6h2.3L1.5 9.5 6 4H3.5z" fill="#fff" stroke="#1c1c1c" strokeWidth="0.7" />
      </svg>
      <Clock>
        20:49
        <br />
        23-06-2025
      </Clock>
    </Tray>
  </Taskbar>
);

const App = () => (
  <Desktop>
    <GlobalStyle />
    <BrowserTabs />
    <BrowserToolbar />
    <Preview>
      <PreviewToolbar />
      <Viewport>
        <Site />
        <Scrollbar>
          <svg width="10" height="9" viewBox="0 0 10 9">
            <path d="M5 1L9 8H1z" fill="#8b8b8b" stroke="#8b8b8b" strokeLinejoin="round" />
          </svg>
          <Thumb />
          <svg width="10" height="9" viewBox="0 0 10 9">
            <path d="M5 8L9 1H1z" fill="#8b8b8b" stroke="#8b8b8b" strokeLinejoin="round" />
          </svg>
        </Scrollbar>
      </Viewport>
    </Preview>
    <DesktopTaskbar />
  </Desktop>
);

export default App;
